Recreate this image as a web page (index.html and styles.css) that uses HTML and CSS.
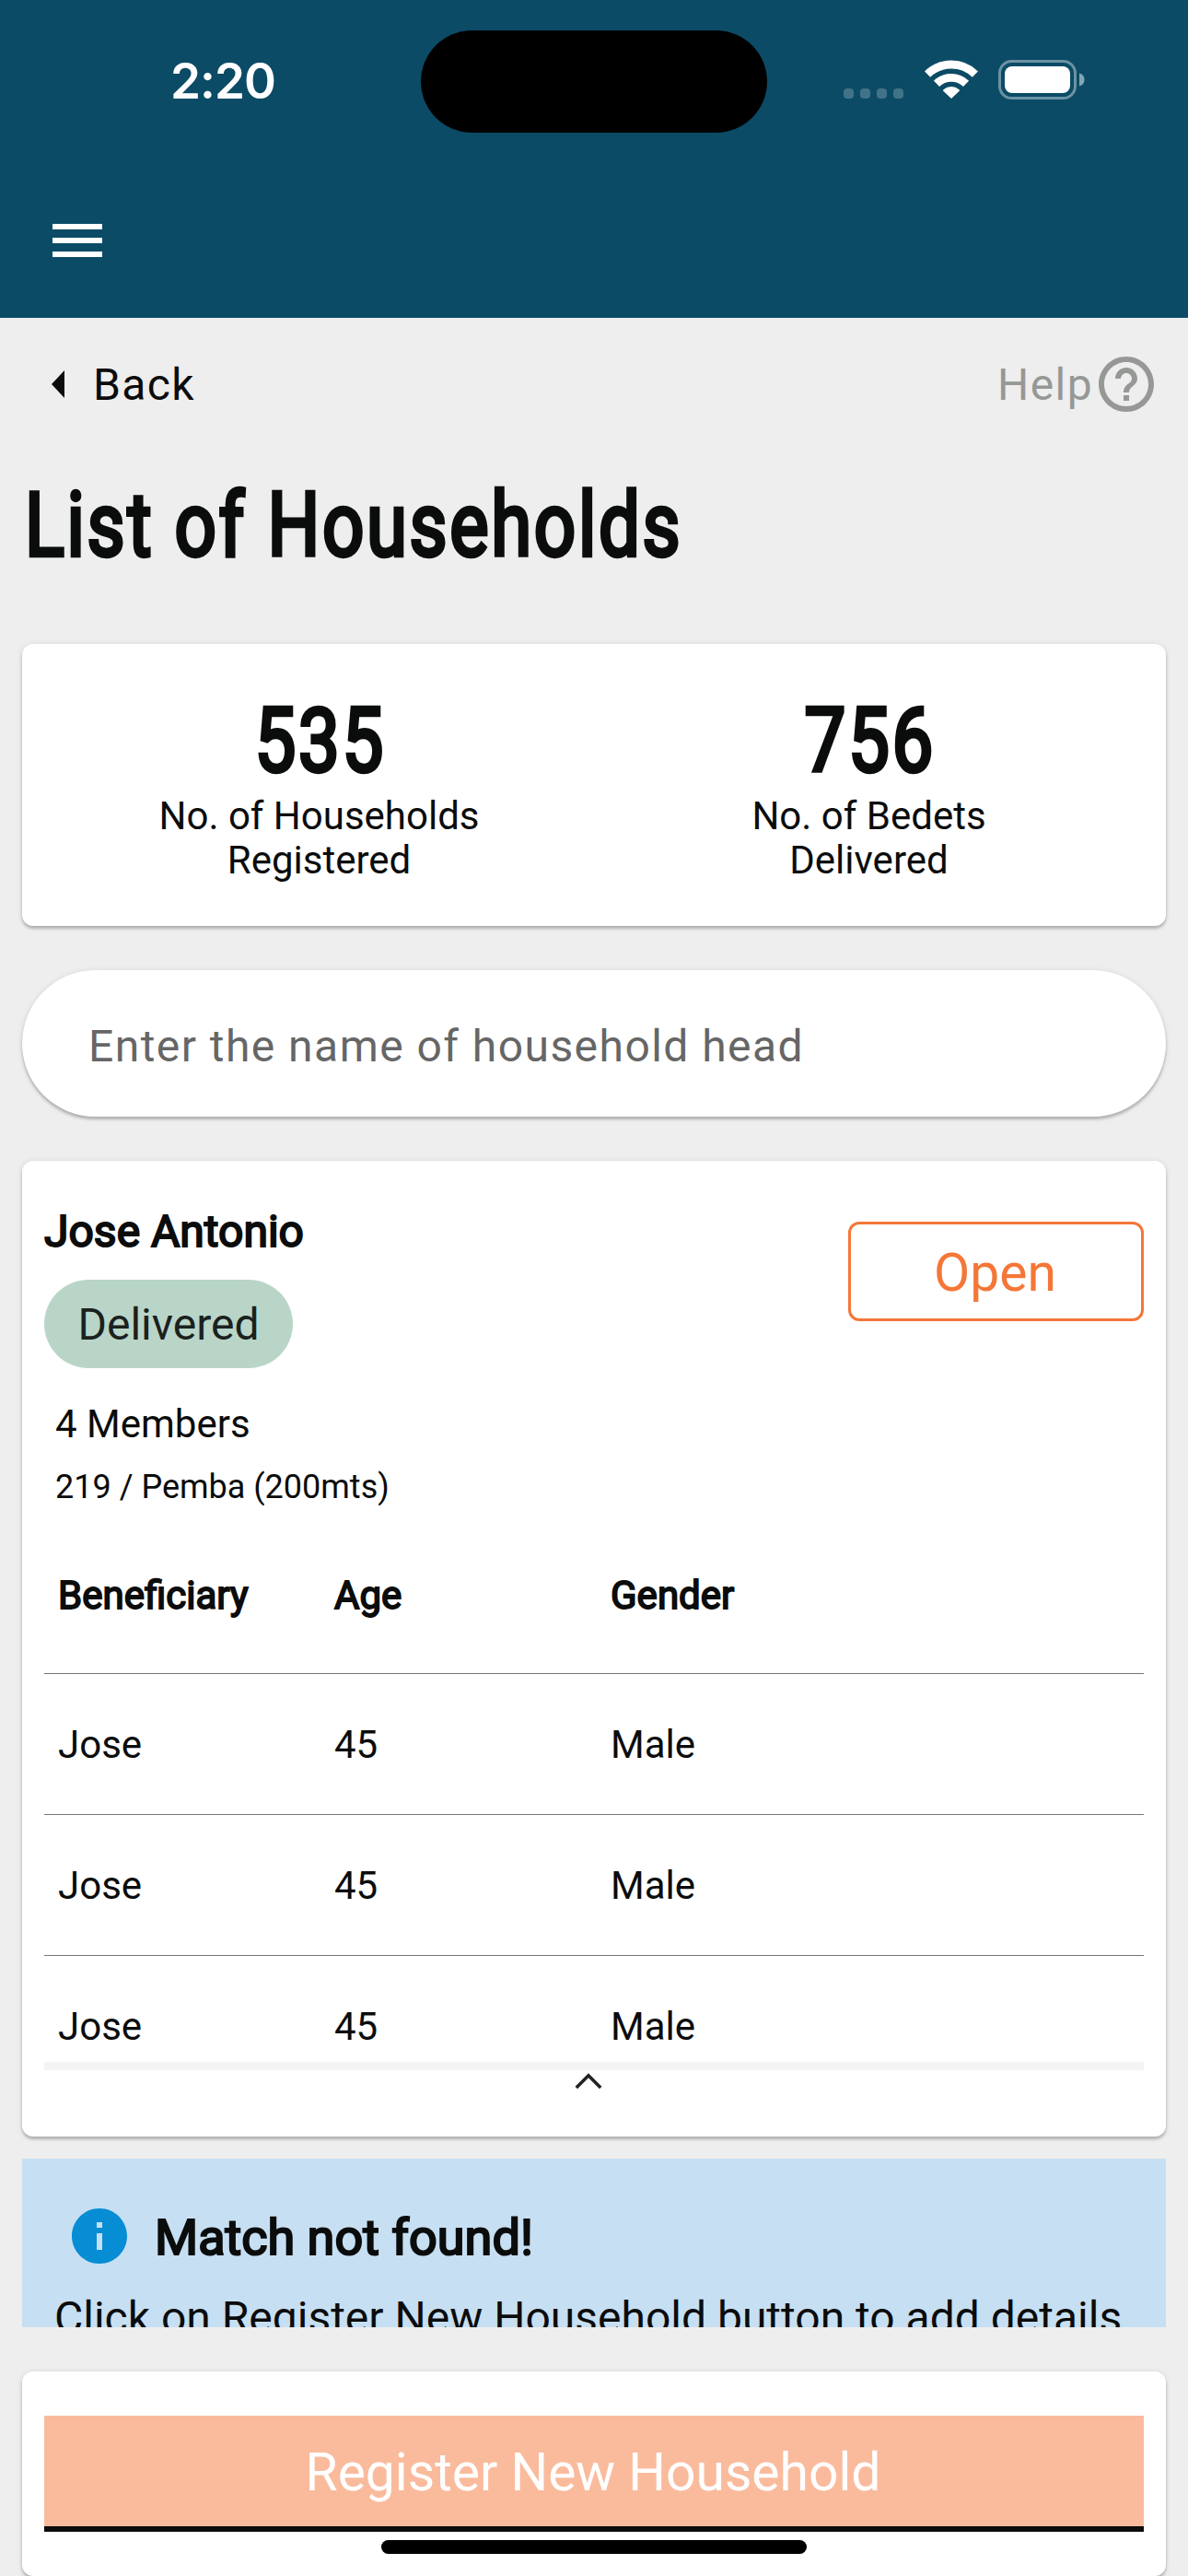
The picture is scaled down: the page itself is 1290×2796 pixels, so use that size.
FILE: index.html
```html
<!DOCTYPE html>
<html lang="en">
<head>
<meta charset="utf-8">
<title>List of Households</title>
<link rel="stylesheet" href="styles.css">
</head>
<body>
<div class="screen">
  <header class="header">
    <div class="status">
      <span class="clock">2:20</span>
      <div class="island"></div>
      <div class="indicators">
        <svg class="signal" width="66" height="12" viewBox="0 0 66 12"><g fill="#fff" opacity=".22"><rect width="11" height="11" rx="4"/><rect x="18" width="11" height="11" rx="4"/><rect x="36" width="11" height="11" rx="4"/><rect x="54" width="11" height="11" rx="4"/></g></svg>
        <svg class="wifi" width="58" height="42" viewBox="0 0 58 42"><g fill="none" stroke="#fff" stroke-width="8.8"><path d="M3.1 15.6a37 37 0 0 1 51.8 0"/><path d="M13 25.8a23 23 0 0 1 32 0"/></g><path fill="#fff" d="M29 42l-9-8.600q0-.8.8-1.400a12.500 12.500 0 0 1 16.400 0q.8.6.8 1.400z"/></svg>
        <svg class="battery" width="94" height="43" viewBox="0 0 94 43"><rect x="1.500" y="1.500" width="82" height="40" rx="13" fill="none" stroke="#fff" stroke-width="3" opacity=".4"/><rect x="7" y="7" width="71" height="29" rx="8" fill="#fff"/><path d="M88 14.500q5.500 1.600 5.500 7t-5.500 7z" fill="#fff" opacity=".5"/></svg>
      </div>
    </div>
    <svg class="menu" width="54" height="36" viewBox="0 0 54 36"><path fill="#fff" d="M0 0h54v6H0zM0 15h54v6H0zM0 30h54v6H0z"/></svg>
  </header>

  <nav class="nav">
    <a class="back"><svg width="14" height="30" viewBox="0 0 14 30"><path fill="#0b0c0c" d="M14 0v30L0 15z"/></svg><span>Back</span></a>
    <a class="help"><span>Help</span><svg width="60" height="60" viewBox="2 2 20 20"><path fill="#969896" d="M11 18h2v-2h-2v2zm1-16C6.480 2 2 6.480 2 12s4.480 10 10 10 10-4.480 10-10S17.520 2 12 2zm0 18c-4.410 0-8-3.590-8-8s3.590-8 8-8 8 3.590 8 8-3.590 8-8 8zm0-14c-2.210 0-4 1.790-4 4h2c0-1.100.9-2 2-2s2 .9 2 2c0 2-3 1.750-3 5h2c0-2.250 3-2.500 3-5 0-2.210-1.790-4-4-4z"/></svg></a>
  </nav>

  <h1 class="title"><span class="condensed">List of Households</span></h1>

  <section class="card stats">
    <div class="stat">
      <strong class="num"><span class="condensed">535</span></strong>
      <span class="lbl">No. of Households<br>Registered</span>
    </div>
    <div class="stat">
      <strong class="num"><span class="condensed">756</span></strong>
      <span class="lbl">No. of Bedets<br>Delivered</span>
    </div>
  </section>

  <div class="search">Enter the name of household head</div>

  <section class="card household">
    <div class="summary">
      <div class="info">
        <h2 class="name">Jose Antonio</h2>
        <span class="chip">Delivered</span>
        <p class="members">4 Members</p>
        <p class="place">219 / Pemba (200mts)</p>
      </div>
      <button class="open">Open</button>
    </div>
    <div class="table">
      <div class="row head"><span>Beneficiary</span><span>Age</span><span>Gender</span></div>
      <div class="row"><span>Jose</span><span>45</span><span>Male</span></div>
      <div class="row"><span>Jose</span><span>45</span><span>Male</span></div>
      <div class="row"><span>Jose</span><span>45</span><span>Male</span></div>
    </div>
    <div class="strip"></div>
    <svg class="collapse" width="30" height="18" viewBox="0 0 30 18"><path d="M1.800 16L15 2.800 28.200 16" fill="none" stroke="#212424" stroke-width="3.600"/></svg>
  </section>

  <section class="notice">
    <div class="notice-head">
      <svg width="60" height="60" viewBox="2 2 20 20"><path fill="#068dd4" d="M12 2C6.480 2 2 6.480 2 12s4.480 10 10 10 10-4.480 10-10S17.520 2 12 2zm1 15h-2v-6h2v6zm0-8h-2V7h2v2z"/></svg>
      <h3>Match not found!</h3>
    </div>
    <p>Click on Register New Household button to add details</p>
  </section>

  <footer class="card footer">
    <button class="register">Register New Household</button>
    <div class="home"></div>
  </footer>
</div>
</body>
</html>
```
FILE: styles.css
```css
* { box-sizing: border-box; margin: 0; padding: 0; }

body {
  background: #eee;
  color: #0b0c0c;
  font-family: Roboto, "Liberation Sans", sans-serif;
  font-size: 42px;
}

svg { display: block; flex: none; }
button { font-family: inherit; background: none; border: 0; }

.screen {
  display: flex;
  flex-direction: column;
  width: 1290px;
  height: 2796px;
  overflow: hidden;
}

.header { height: 345px; background: #0b4b66; }

.status {
  display: grid;
  grid-template-columns: 457px 376px 1fr;
  height: 243px;
  padding-top: 33px;
  color: #fff;
}
.clock {
  justify-self: start;
  margin: 23px 0 0 185px;
  font: 600 53px/64px Inter, sans-serif;
  letter-spacing: -1px;
}
.island { height: 111px; border-radius: 56px; background: #000; }
.indicators { display: flex; align-items: flex-start; padding-left: 83px; }
.signal { margin-top: 63px; }
.wifi { margin: 32px 0 0 22px; }
.battery { margin: 32px 0 0 22px; }
.menu { margin-left: 57px; }

.nav {
  display: flex;
  justify-content: space-between;
  align-items: center;
  height: 144px;
  padding: 0 37px 0 56px;
  font-size: 48px;
  letter-spacing: 1.4px;
}
.back, .help { display: flex; align-items: center; }
.back { gap: 31px; }
.help { gap: 6px; color: #969896; }

.title {
  height: 210px;
  padding: 25px 0 0 27px;
  font-size: 96px;
  line-height: 112px;
}
/* Roboto narrowed to its condensed proportions */
.condensed {
  display: inline-block;
  font-weight: 400;
  letter-spacing: 3.2px;
  transform: scaleX(.83);
  transform-origin: left;
  -webkit-text-stroke: 4.4px #0b0c0c;
}
.num .condensed { margin-left: 3px; transform-origin: center; }

.card {
  margin: 0 24px;
  border-radius: 12px;
  background: #fff;
  box-shadow: 0 3px 3px rgba(0, 0, 0, .2), 0 1px 6px rgba(0, 0, 0, .12);
}

.stats {
  display: grid;
  grid-template-columns: 1fr 1fr;
  height: 306px;
  padding: 49px 24px;
  text-align: center;
}
.num { display: block; font-size: 96px; line-height: 112px; }
.lbl { display: block; margin-top: 2px; line-height: 48px; }

.search {
  display: flex;
  align-items: center;
  height: 159px;
  margin: 48px 24px;
  padding: 5px 72px 0;
  border-radius: 80px;
  background: #fff;
  color: #666;
  font-size: 48px;
  letter-spacing: 1.45px;
  box-shadow: 0 3px 3px rgba(0, 0, 0, .2), 0 1px 6px rgba(0, 0, 0, .12);
}

.household { height: 1059px; padding: 48px 24px 0; }
.summary { display: flex; justify-content: space-between; height: 339px; }
.name {
  height: 81px;
  padding-top: 1px;
  font-size: 48px;
  font-weight: 400;
  line-height: 56px;
  -webkit-text-stroke: 2px #0b0c0c;
}
.chip {
  display: flex;
  align-items: center;
  justify-content: center;
  width: 270px;
  height: 96px;
  border-radius: 48px;
  background: #b9d5c8;
  color: #1b211e;
  font-size: 48px;
}
.members { margin-top: 36px; padding-left: 12px; line-height: 50px; }
.place { margin-top: 22px; padding-left: 12px; font-size: 36px; line-height: 42px; }
.open {
  width: 321px;
  height: 108px;
  margin-top: 18px;
  padding: 2px 2px 0 0;
  border: 3px solid #f47738;
  border-radius: 12px;
  color: #f47738;
  font-size: 57px;
}

.table { height: 591px; overflow: hidden; }
.row {
  display: grid;
  grid-template-columns: 300px 300px 1fr;
  align-items: center;
  height: 153px;
  padding-left: 15px;
  border-top: 1px solid #757575;
}
.row.head {
  height: 169px;
  border: 0;
  -webkit-text-stroke: 1.8px #0b0c0c;
}
.strip { height: 9px; background: #f4f4f4; }
.collapse { margin: 3px 0 0 576px; }

.notice {
  height: 183px;
  margin: 24px 24px 48px;
  overflow: hidden;
  background: #c7dff2;
  padding: 54px 36px 0;
}
.notice-head { display: flex; align-items: center; gap: 30px; padding-left: 18px; }
.notice h3 {
  padding-top: 3px;
  font-size: 54px;
  font-weight: 400;
  line-height: 57px;
  -webkit-text-stroke: 2.2px #0b0c0c;
}
.notice p {
  margin: 31px 0 0 -1px;
  font-size: 48px;
  line-height: 56px;
  white-space: nowrap;
}

.footer { height: 222px; padding: 48px 24px 0; }
.register {
  display: block;
  width: 100%;
  height: 126px;
  padding: 2px 2px 0 0;
  background: #fabb9d;
  border-bottom: 6px solid #0b0c0c;
  color: #fff;
  font-size: 57px;
}
.home { width: 462px; height: 15px; margin: 9px auto 0; border-radius: 8px; background: #000; }
```
